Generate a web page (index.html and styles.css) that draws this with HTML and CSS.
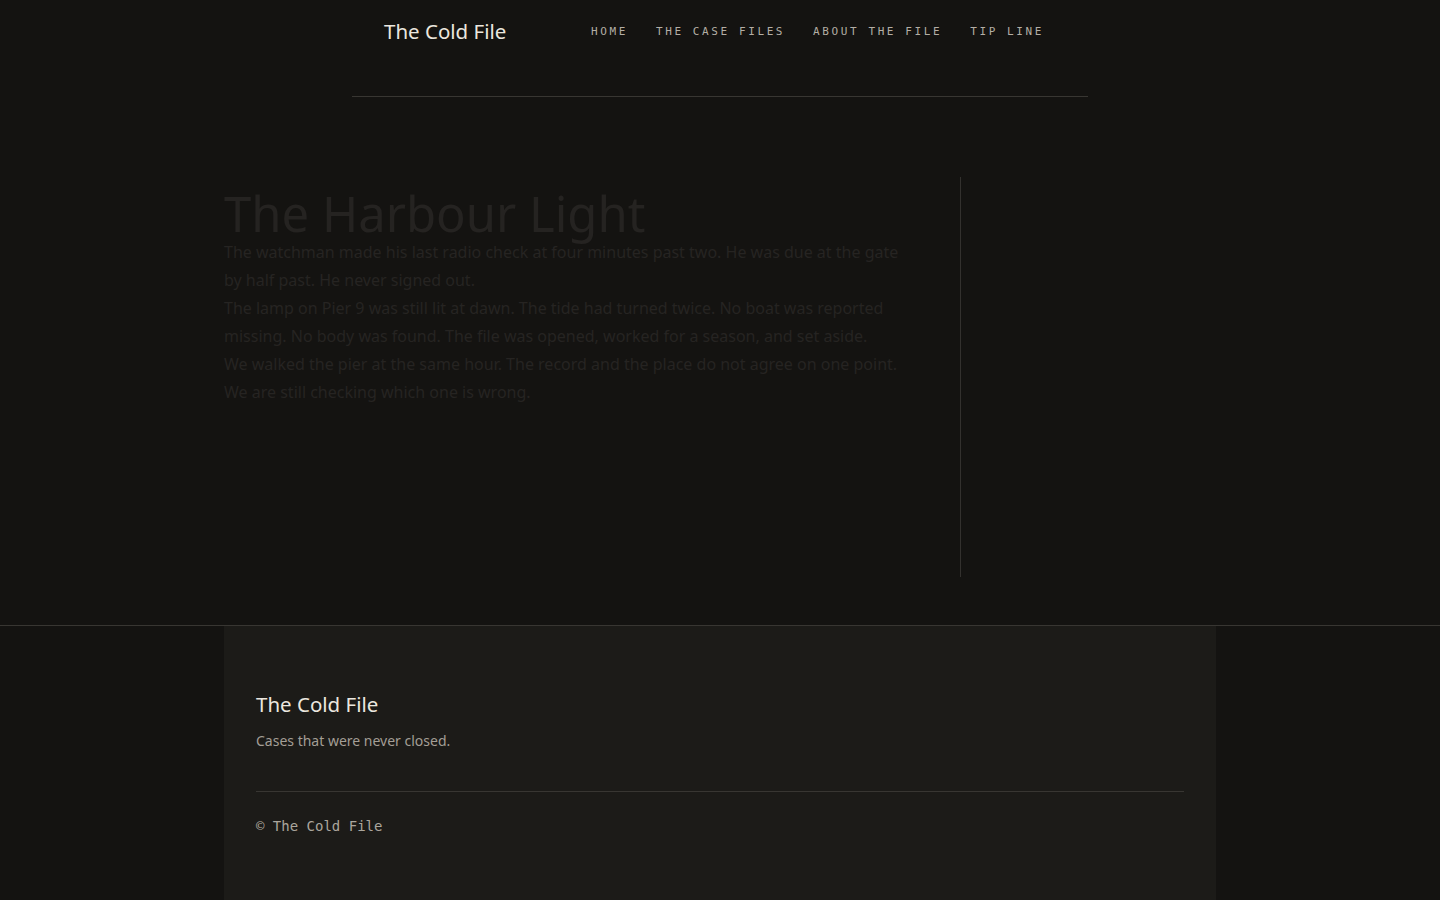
FILE: index.html
```html
<!DOCTYPE html>
<html lang="en">
<head>
    <meta charset="UTF-8">
    <meta name="viewport" content="width=device-width, initial-scale=1.0">
    <title>The Harbour Light — The Cold File</title>
    <link rel="stylesheet" href="styles.css">
</head>
<body>
    <header class="site-header">
        <div class="header-inner">
            <a class="logo" href="#">The Cold File</a>
            <nav class="nav">
                <a href="#">Home</a>
                <a href="#">The Case Files</a>
                <a href="#">About the File</a>
                <a href="#">Tip Line</a>
            </nav>
        </div>
    </header>

    <main class="page">
        <article class="story">
            <h1>The Harbour Light</h1>
            <p>The watchman made his last radio check at four minutes past two. He was due at the gate by half past. He never signed out.</p>
            <p>The lamp on Pier 9 was still lit at dawn. The tide had turned twice. No boat was reported missing. No body was found. The file was opened, worked for a season, and set aside.</p>
            <p>We walked the pier at the same hour. The record and the place do not agree on one point. We are still checking which one is wrong.</p>
        </article>
        <aside class="sidebar"></aside>
    </main>

    <footer class="site-footer">
        <div class="footer-inner">
            <h2 class="footer-title">The Cold File</h2>
            <p class="tagline">Cases that were never closed.</p>
            <div class="footer-rule"></div>
            <p class="copyright">© The Cold File</p>
        </div>
    </footer>
</body>
</html>
```

FILE: styles.css
```css
body {
    margin: 0;
    background: #141311;
    color: #e8e4dc;
    font-family: "Noto Sans", "Open Sans", sans-serif;
}

a {
    color: inherit;
    text-decoration: none;
}

/* top bar */
.header-inner {
    width: 736px;
    height: 97px;
    margin: 0 auto;
    box-sizing: border-box;
    padding: 16px 44px 0 32px;
    border-bottom: 1px solid #383632;
    display: flex;
    align-items: flex-start;
    justify-content: space-between;
}

.logo {
    font-size: 20.5px;
    line-height: 31px;
    color: #ebe7df;
}

.nav {
    display: flex;
    gap: 28px;
    height: 30px;
    align-items: center;
}

.nav a {
    font-family: "DejaVu Sans Mono", monospace;
    font-size: 11px;
    letter-spacing: 2.6px;
    text-transform: uppercase;
    color: #b3aea5;
}

/* article + empty side column */
.page {
    width: 992px;
    margin: 0 auto;
    padding: 80px 0 48px;
    display: grid;
    grid-template-columns: 680px 1fr;
    column-gap: 56px;
}

.story {
    padding-top: 12px;
    color: #262422;
}

.story h1 {
    margin: 0;
    font-size: 49px;
    font-weight: 400;
    line-height: 1;
    color: #252321;
}

.story p {
    margin: 0;
    font-size: 16px;
    line-height: 28px;
}

.sidebar {
    min-height: 400px;
    border-left: 1px solid #33312e;
}

/* footer */
.site-footer {
    border-top: 1px solid #383632;
    background: #141311;
}

.footer-inner {
    width: 992px;
    margin: 0 auto;
    box-sizing: border-box;
    padding: 64px 32px 68px;
    background: #1c1b18;
}

.footer-title {
    margin: 0;
    font-size: 20.5px;
    font-weight: 400;
    line-height: 28px;
    color: #ebe7df;
}

.tagline {
    margin: 12px 0 0;
    font-size: 14px;
    line-height: 21px;
    color: #a39e95;
}

.footer-rule {
    height: 1px;
    margin-top: 40px;
    background: #383632;
}

.copyright {
    margin: 24px 0 0;
    font-family: "DejaVu Sans Mono", monospace;
    font-size: 14px;
    line-height: 21px;
    color: #aba69d;
}
```
